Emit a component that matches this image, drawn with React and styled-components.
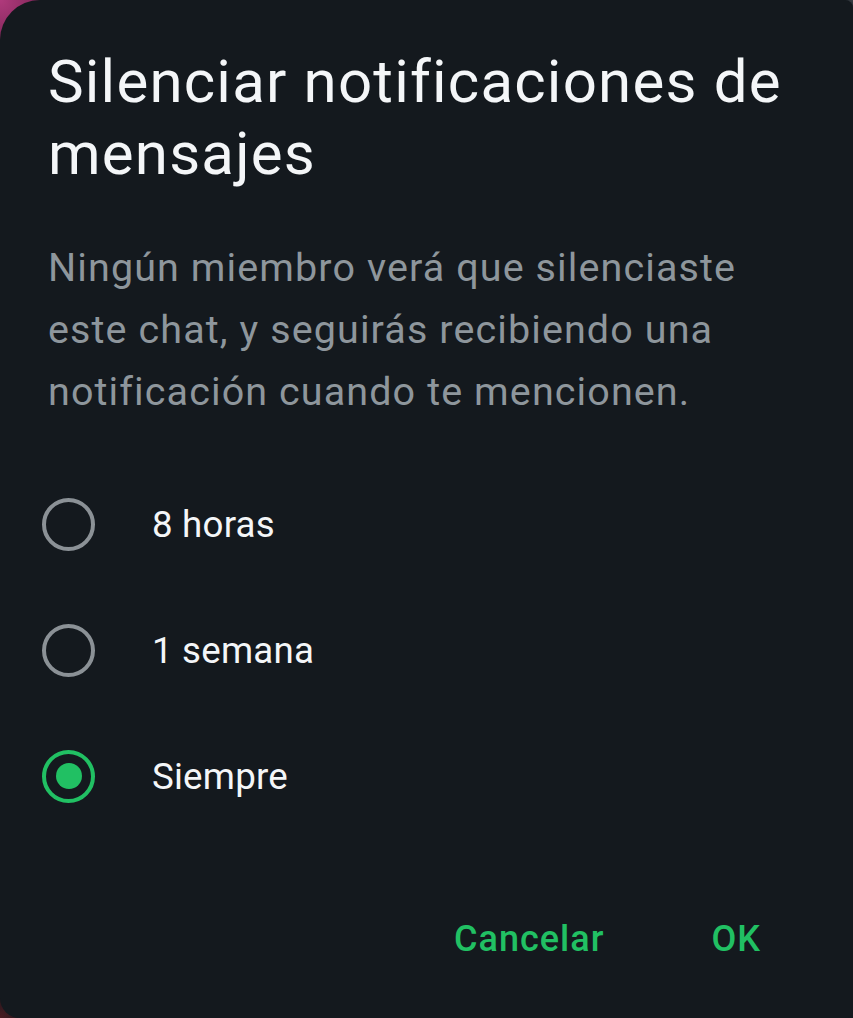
import React, { useState } from "react";
import styled, { createGlobalStyle } from "styled-components";

const GlobalStyle = createGlobalStyle`
  html, body {
    margin: 0;
    padding: 0;
    height: 100%;
  }
  body {
    font-family: Roboto, "Noto Sans", sans-serif;
    background:
      radial-gradient(circle at 0 0, #b03a7c 0, #8e2c63 30px, transparent 60px),
      radial-gradient(circle at 0 100%, #4a1a20 0, transparent 30px),
      radial-gradient(circle at 100% 0, #3a4046 0, transparent 14px),
      #14191e;
  }
  #root {
    height: 100%;
  }
`;

const colors = {
  surface: "#14191e",
  title: "#f4f6f8",
  body: "#8e969c",
  ring: "#8b9196",
  green: "#21c063",
};

const Dialog = styled.div`
  box-sizing: border-box;
  width: 853px;
  height: 1018px;
  background-color: ${colors.surface};
  border-radius: 40px 8px 8px 20px;
  padding: 46px 48px 0 48px;
  display: flex;
  flex-direction: column;
`;

const Title = styled.h1`
  margin: 0;
  font-weight: 400;
  font-size: 60px;
  line-height: 72px;
  color: ${colors.title};
  letter-spacing: 1.2px;
`;

const Message = styled.p`
  margin: 47px 0 0 0;
  max-width: 745px;
  font-size: 39.5px;
  line-height: 62px;
  color: ${colors.body};
  letter-spacing: 1.1px;
`;

const Options = styled.div`
  margin-top: 38px;
  display: flex;
  flex-direction: column;
  margin-left: -6px;
`;

const Option = styled.label`
  display: flex;
  align-items: center;
  height: 126px;
  cursor: pointer;
`;

const Radio = styled.span`
  box-sizing: border-box;
  width: 53px;
  height: 53px;
  border-radius: 50%;
  border: 4.5px solid ${({ $checked }) => ($checked ? colors.green : colors.ring)};
  display: flex;
  align-items: center;
  justify-content: center;
  flex-shrink: 0;

  &::after {
    content: "";
    width: 26px;
    height: 26px;
    border-radius: 50%;
    background-color: ${colors.green};
    display: ${({ $checked }) => ($checked ? "block" : "none")};
  }
`;

const OptionText = styled.span`
  margin-left: 57px;
  font-size: 36.7px;
  color: ${colors.title};
  letter-spacing: 0.2px;
`;

const Actions = styled.div`
  margin-top: auto;
  margin-bottom: 58px;
  display: flex;
  justify-content: flex-end;
  gap: 107px;
  padding-right: 44px;
`;

const ActionButton = styled.button`
  background: none;
  border: none;
  padding: 0;
  font-family: inherit;
  font-weight: 500;
  font-size: 36px;
  letter-spacing: 1px;
  color: ${colors.green};
  cursor: pointer;
`;

const choices = ["8 horas", "1 semana", "Siempre"];

export default function App() {
  const [selected, setSelected] = useState(2);

  return (
    <>
      <GlobalStyle />
      <Dialog>
        <Title>Silenciar notificaciones de mensajes</Title>
        <Message>
          Ningún miembro verá que silenciaste este chat, y seguirás recibiendo una
          notificación cuando te mencionen.
        </Message>
        <Options>
          {choices.map((c, i) => (
            <Option key={c} onClick={() => setSelected(i)}>
              <Radio $checked={selected === i} />
              <OptionText>{c}</OptionText>
            </Option>
          ))}
        </Options>
        <Actions>
          <ActionButton>Cancelar</ActionButton>
          <ActionButton>OK</ActionButton>
        </Actions>
      </Dialog>
    </>
  );
}
